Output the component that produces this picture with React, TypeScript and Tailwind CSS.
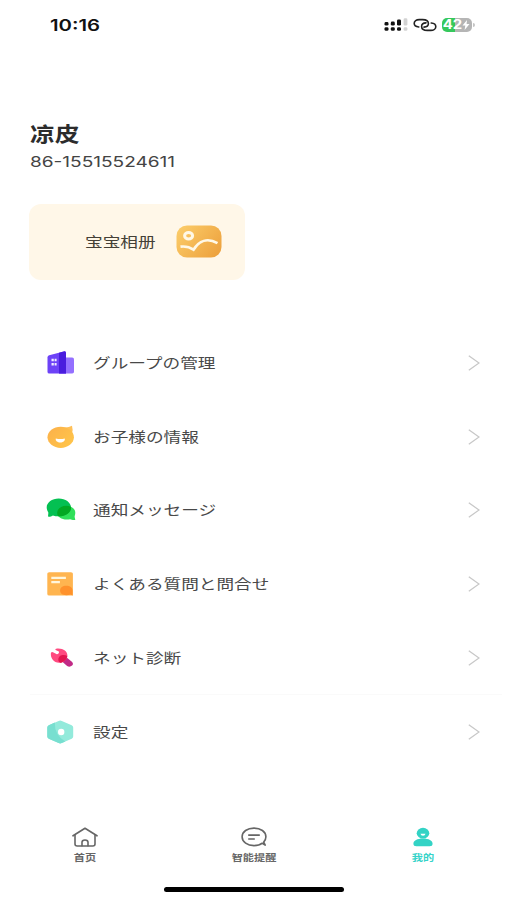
import React from 'react';

interface MenuItem {
    label: string;
    icon: React.ReactNode;
    divider?: boolean;
}

const GroupIcon = () => (
    <svg className="w-[30px] h-[26px]" viewBox="0 0 30 26" fill="none">
        <rect x="12" y="7.5" width="16" height="16" rx="1.8" fill="#9470ff" />
        <path d="M1.5 7.6Q1.5 5.8 3.2 5.3L17.8 1.4Q20 1 20 3v20.5H3.3Q1.5 23.5 1.5 22Z" fill="#6d42f7" />
        <path d="M13 2.7L17.8 1.4Q20 1 20 3v20.5h-7Z" fill="#4a1dde" />
        <path d="M5.5 8.8h2.300v2.400H5.500zM8.600 8.800h2v2.400h-2zM5.500 13h2.300v2.400H5.500zM8.600 13h2v2.400h-2z" fill="#f1ecff" />
    </svg>
);

const BabyIcon = () => (
    <svg className="w-[30px] h-[26px]" viewBox="0 0 30 26" fill="none">
        <defs>
            <linearGradient id="baby" x1="4" y1="4" x2="26" y2="24" gradientUnits="userSpaceOnUse">
                <stop stopColor="#fcb24a" />
                <stop offset="1" stopColor="#ffc64a" />
            </linearGradient>
        </defs>
        <path d="M17 3.300Q22 4 26 1.800Q27.400 6 25.800 10.500Z" fill="#ffc058" />
        <ellipse cx="14.700" cy="13.300" rx="13.200" ry="10.600" fill="url(#baby)" />
        <path d="M9.800 14.600q4.500 1 9 0c.6 2.400-1.800 4-4.500 4s-5.100-1.600-4.500-4Z" fill="#fff" />
    </svg>
);

const MessageIcon = () => (
    <svg className="w-[30px] h-[26px]" viewBox="0 0 30 26" fill="none">
        <path d="M20.400 8.800c4.900 0 8.900 3 8.900 6.900 0 2-.9 3.500-.6 4.600.2 1 .6 1.900.6 2.700-2 .3-4-.2-5.200-.8-1 .3-2.100.4-3.300.4-5.400 0-9.400-3-9.400-6.900s4-6.900 9-6.900Z" fill="#2fe05a" />
        <path d="M12.700 1.500C6 1.500.7 5.400.7 10.400c0 2 .9 3.900 1.600 5 .2 1.300-.3 2.700-.3 4.200 1.900.2 3.600-.4 4.900-1.200 1.700.6 3.600.9 5.600.9 6.700 0 12.500-4 12.500-8.900S19.400 1.500 12.700 1.500Z" fill="#04c052" />
        <path d="M20.400 8.800c1.600 0 3 .3 4.400.9 1.600 5.300-5.200 10-12.800 9.600-2.600-4.900 1.200-10.500 8.400-10.500Z" fill="#02a823" />
    </svg>
);

const FaqIcon = () => (
    <svg className="w-[30px] h-[26px]" viewBox="0 0 30 26" fill="none">
        <path d="M3.200 1.200h21.800q1.900 0 1.900 1.500v21.900H3.200q-1.900 0-1.900-1.500V2.700q0-1.500 1.900-1.500Z" fill="#ffb550" />
        <path d="M20.300 14.700c3.700 0 6.300 1.900 6.300 4.700v5.100l-2.100-.9c-1.200.5-2.600.6-4.200.6-3.700 0-6.200-1.900-6.200-4.700s2.500-4.800 6.200-4.800Z" fill="#ff922c" />
        <path d="M5.300 6.900h14.600M5.300 11.200h8.600" stroke="#fff6dc" strokeWidth="2.200" />
    </svg>
);

const WrenchIcon = () => (
    <svg className="w-[30px] h-[26px]" viewBox="0 0 30 26" fill="none">
        <path d="M15.500 16l4.500-4 5.900 4.700q2 2 .2 3.900-2.500 1.900-5 .3Z" fill="#c12a86" />
        <path d="M4.900 8.100q.6-1.700 2.600-.7l3.300 1.900q2.700-.4 2.100-2.700L9.600 5.100Q8.700 3.900 11.200 3.600c6-.4 10.300 2.700 10.200 6.900-.1 4.600-3.900 7.300-8.400 7.300-5.200 0-8.700-4.500-8.100-9.700Z" fill="#ff4a80" />
        <path d="M12.300 15.200q-.3-4.300 4.300-5.100 2.600-.3 4.700.9-.6 4.200-5 6.200-1.100.5-2 .5-1.700-.7-2-2.500Z" fill="#e2154f" />
    </svg>
);

const SettingsIcon = () => (
    <svg className="w-[30px] h-[26px]" viewBox="0 0 30 26" fill="none">
        <path d="M12.600 1.900q1.600-.8 3.200 0l9.900 4.400q1.500.8 1.500 2.200v9q0 1.400-1.500 2.200l-9.900 4.400q-1.600.7-3.200 0l-9.800-4.400q-1.500-.8-1.500-2.200v-9q0-1.400 1.500-2.200Z" fill="#93eadb" />
        <path d="M8.800 3.600L2.800 6.300q-1.500.8-1.500 2.200v9q0 1.400 1.500 2.200l9.800 4.400q1.600.7 3.200 0l3.500-1.600Q8.500 16.500 8.800 3.600Z" fill="#78dfd0" />
        <circle cx="15.200" cy="13" r="3.200" fill="#fff" />
    </svg>
);

const AlbumIcon = () => (
    <svg className="w-[46px] h-[33px]" viewBox="0 0 46 33" fill="none">
        <defs>
            <linearGradient id="album" x1="4" y1="2" x2="40" y2="32" gradientUnits="userSpaceOnUse">
                <stop stopColor="#fbcb68" />
                <stop offset="1" stopColor="#eda23e" />
            </linearGradient>
        </defs>
        <rect x="0.5" y="0.5" width="45" height="32" rx="10.5" fill="url(#album)" />
        <ellipse cx="12.600" cy="10.700" rx="4" ry="3.300" stroke="#fff8e6" strokeWidth="3" />
        <path d="M4.500 21.700c4.500-.6 8.500-.1 13 3C23 15.700 31.500 12.500 41.500 18.200" stroke="#fff8e6" strokeWidth="2.700" />
    </svg>
);

const menuItems: MenuItem[] = [
    { label: 'グループの管理', icon: <GroupIcon /> },
    { label: 'お子様の情報', icon: <BabyIcon /> },
    { label: '通知メッセージ', icon: <MessageIcon /> },
    { label: 'よくある質問と問合せ', icon: <FaqIcon /> },
    { label: 'ネット診断', icon: <WrenchIcon />, divider: true },
    { label: '設定', icon: <SettingsIcon /> },
];

const StatusBar = () => (
    <header className="h-[49px] pl-[50px] pr-[32px] flex items-center justify-between">
        <span className="inline-block origin-left scale-x-[1.27] font-['Inter'] text-base leading-none font-semibold text-[#111]">10:16</span>
        <div className="flex items-center gap-[5px]">
            <svg className="w-[24px] h-[14px]" viewBox="0 0 24 14" fill="#111">
                <rect x="0.5" y="4" width="4" height="3.6" rx="1.4" />
                <rect x="6.8" y="3.6" width="4" height="4" rx="1.4" />
                <rect x="13" y="1.4" width="4" height="6.2" rx="1.4" />
                <rect x="0.5" y="9.2" width="4" height="3.6" rx="1.4" />
                <rect x="6.8" y="9.2" width="4" height="3.6" rx="1.4" />
                <rect x="13" y="9.2" width="4" height="3.6" rx="1.4" />
                <rect x="19.6" y="0.3" width="3.8" height="7.3" rx="1.4" fill="#d2d2d2" />
                <rect x="19.6" y="9.2" width="3.8" height="3.6" rx="1.4" fill="#d2d2d2" />
            </svg>
            <svg className="w-[24px] h-[14px]" viewBox="0 0 24 14" fill="none" stroke="#222" strokeWidth="1.6" strokeLinecap="round">
                <path d="M5.800 9C3 8.800 1.200 7.300 1.200 5.300c0-2.200 2.200-3.700 5-3.700h3.400c3.400 0 5.800 1.600 5.800 3.900 0 2-1.600 3.500-4.400 3.600" />
                <path d="M18.200 5c2.800.2 4.600 1.700 4.600 3.700 0 2.200-2.200 3.700-5 3.700h-3.400c-3.400 0-5.800-1.600-5.800-3.900 0-2 1.600-3.500 4.400-3.600" />
            </svg>
            <div className="flex items-center">
                <div className="w-[30px] h-[14px] rounded-[5px] bg-linear-to-r from-[#36c85c] from-43% to-[#b5b5b5] to-43% flex items-center justify-center">
                    <span className="inline-block scale-x-[1.15] font-['Inter'] text-[13px] leading-none font-bold text-white">42</span>
                    <svg className="w-[8px] h-[10px] ml-px" viewBox="0 0 8 10" fill="#fff">
                        <path d="M5 0L0.5 5.6h2.8L2.6 10l4.900-6H4.600Z" />
                    </svg>
                </div>
                <div className="w-[2px] h-[4px] ml-px rounded-r-full bg-[#c4c4c4]" />
            </div>
        </div>
    </header>
);

const MenuRow: React.FC<{ item: MenuItem }> = ({ item }) => (
    <li className={`h-[73.8px] ml-[30px] mr-[5px] pl-4 pr-[22px] flex items-center border-b ${item.divider ? 'border-[#fafafa]' : 'border-transparent'}`}>
        {item.icon}
        <span lang="ja" className="ml-[17px] inline-block origin-left scale-x-[1.26] text-[14px] leading-5 text-[#484848] whitespace-nowrap">
            {item.label}
        </span>
        <svg className="ml-auto w-[12px] h-[16px]" viewBox="0 0 12 16" fill="none" stroke="#c8c8c8" strokeWidth="1.3">
            <path d="M0.8 0.8L11 8L0.8 15.2" />
        </svg>
    </li>
);

const TabBar = () => (
    <nav lang="zh-CN" className="h-[60px] ml-px grid grid-cols-3 text-[9px] leading-[12px] font-bold text-[#666]">
        <button className="flex flex-col items-center gap-[5px]">
            <svg className="w-[26px] h-[20px]" viewBox="0 0 26 20" fill="none" stroke="#666" strokeWidth="1.6" strokeLinejoin="round" strokeLinecap="round">
                <path d="M1 8.8L13 1.2L25 8.8" />
                <path d="M3 8v9q0 2 2.2 2h15.6q2.2 0 2.2-2V8" />
                <path d="M10 18.8v-3.500q0-2.300 3-2.300t3 2.300v3.500" />
            </svg>
            <span className="scale-x-[1.24]">首页</span>
        </button>
        <button className="flex flex-col items-center gap-[5px]">
            <svg className="w-[26px] h-[20px]" viewBox="0 0 26 20" fill="none" stroke="#666" strokeWidth="1.6" strokeLinejoin="round">
                <path d="M21.2 16.2C19 18 16.2 18.6 13 18.6 6.400 18.600 1.100 15 1.100 9.800S6.400 1.100 13 1.100s11.900 3.500 11.900 8.700c0 2-.8 3.900-2.200 5.300l1.500 3Z" />
                <path d="M7.200 8.100h11.600M7.200 12h6.600" />
            </svg>
            <span className="scale-x-[1.24]">智能提醒</span>
        </button>
        <button className="flex flex-col items-center gap-[5px] text-[#35d3c9]">
            <svg className="w-[20px] h-[20px]" viewBox="0 0 20 20" fill="none">
                <path d="M10 11.500c5.800 0 9.600 2.100 9.600 5.200q0 2.500-3 2.500H3.400q-3 0-3-2.500c0-3.100 3.800-5.200 9.600-5.200Z" fill="#33d3c5" />
                <ellipse cx="10" cy="6.200" rx="6.300" ry="5.400" fill="#33d3c5" />
                <path d="M7.500 6.700h5q-.4 2-2.500 2t-2.500-2Z" fill="#fff" />
            </svg>
            <span className="scale-x-[1.24]">我的</span>
        </button>
    </nav>
);

export default function App() {
    return (
        <div className="w-[507px] h-[900px] flex flex-col overflow-hidden bg-white font-['Inter','Noto_Sans_CJK_JP',sans-serif]">
            <StatusBar />

            <section className="mt-[71px] ml-[30px]">
                <h1 lang="zh-CN" className="w-fit origin-left scale-x-[1.24] font-['Noto_Sans_CJK_SC',sans-serif] text-[20px] leading-[27px] font-bold text-[#2c2c2c]">凉皮</h1>
                <p className="mt-[5px] w-fit origin-left scale-x-[1.27] text-[15px] leading-5 text-[#444]">86-15515524611</p>
            </section>

            <button className="mt-[32px] ml-[29px] w-[216px] h-[76px] pl-[56px] pr-[23px] pb-[2px] flex items-center justify-between rounded-xl bg-[#fff7e8]">
                <span lang="zh-CN" className="inline-block origin-left scale-x-[1.26] font-['Noto_Sans_CJK_SC',sans-serif] text-[14px] leading-5 text-[#444036]">宝宝相册</span>
                <AlbumIcon />
            </button>

            <ul className="mt-[46.4px]">
                {menuItems.map(item => (
                    <MenuRow key={item.label} item={item} />
                ))}
            </ul>

            <div className="mt-auto font-['Noto_Sans_CJK_SC',sans-serif]">
                <TabBar />
                <div className="ml-[164px] mb-2 w-[180px] h-[5px] rounded-full bg-black" />
            </div>
        </div>
    );
}
